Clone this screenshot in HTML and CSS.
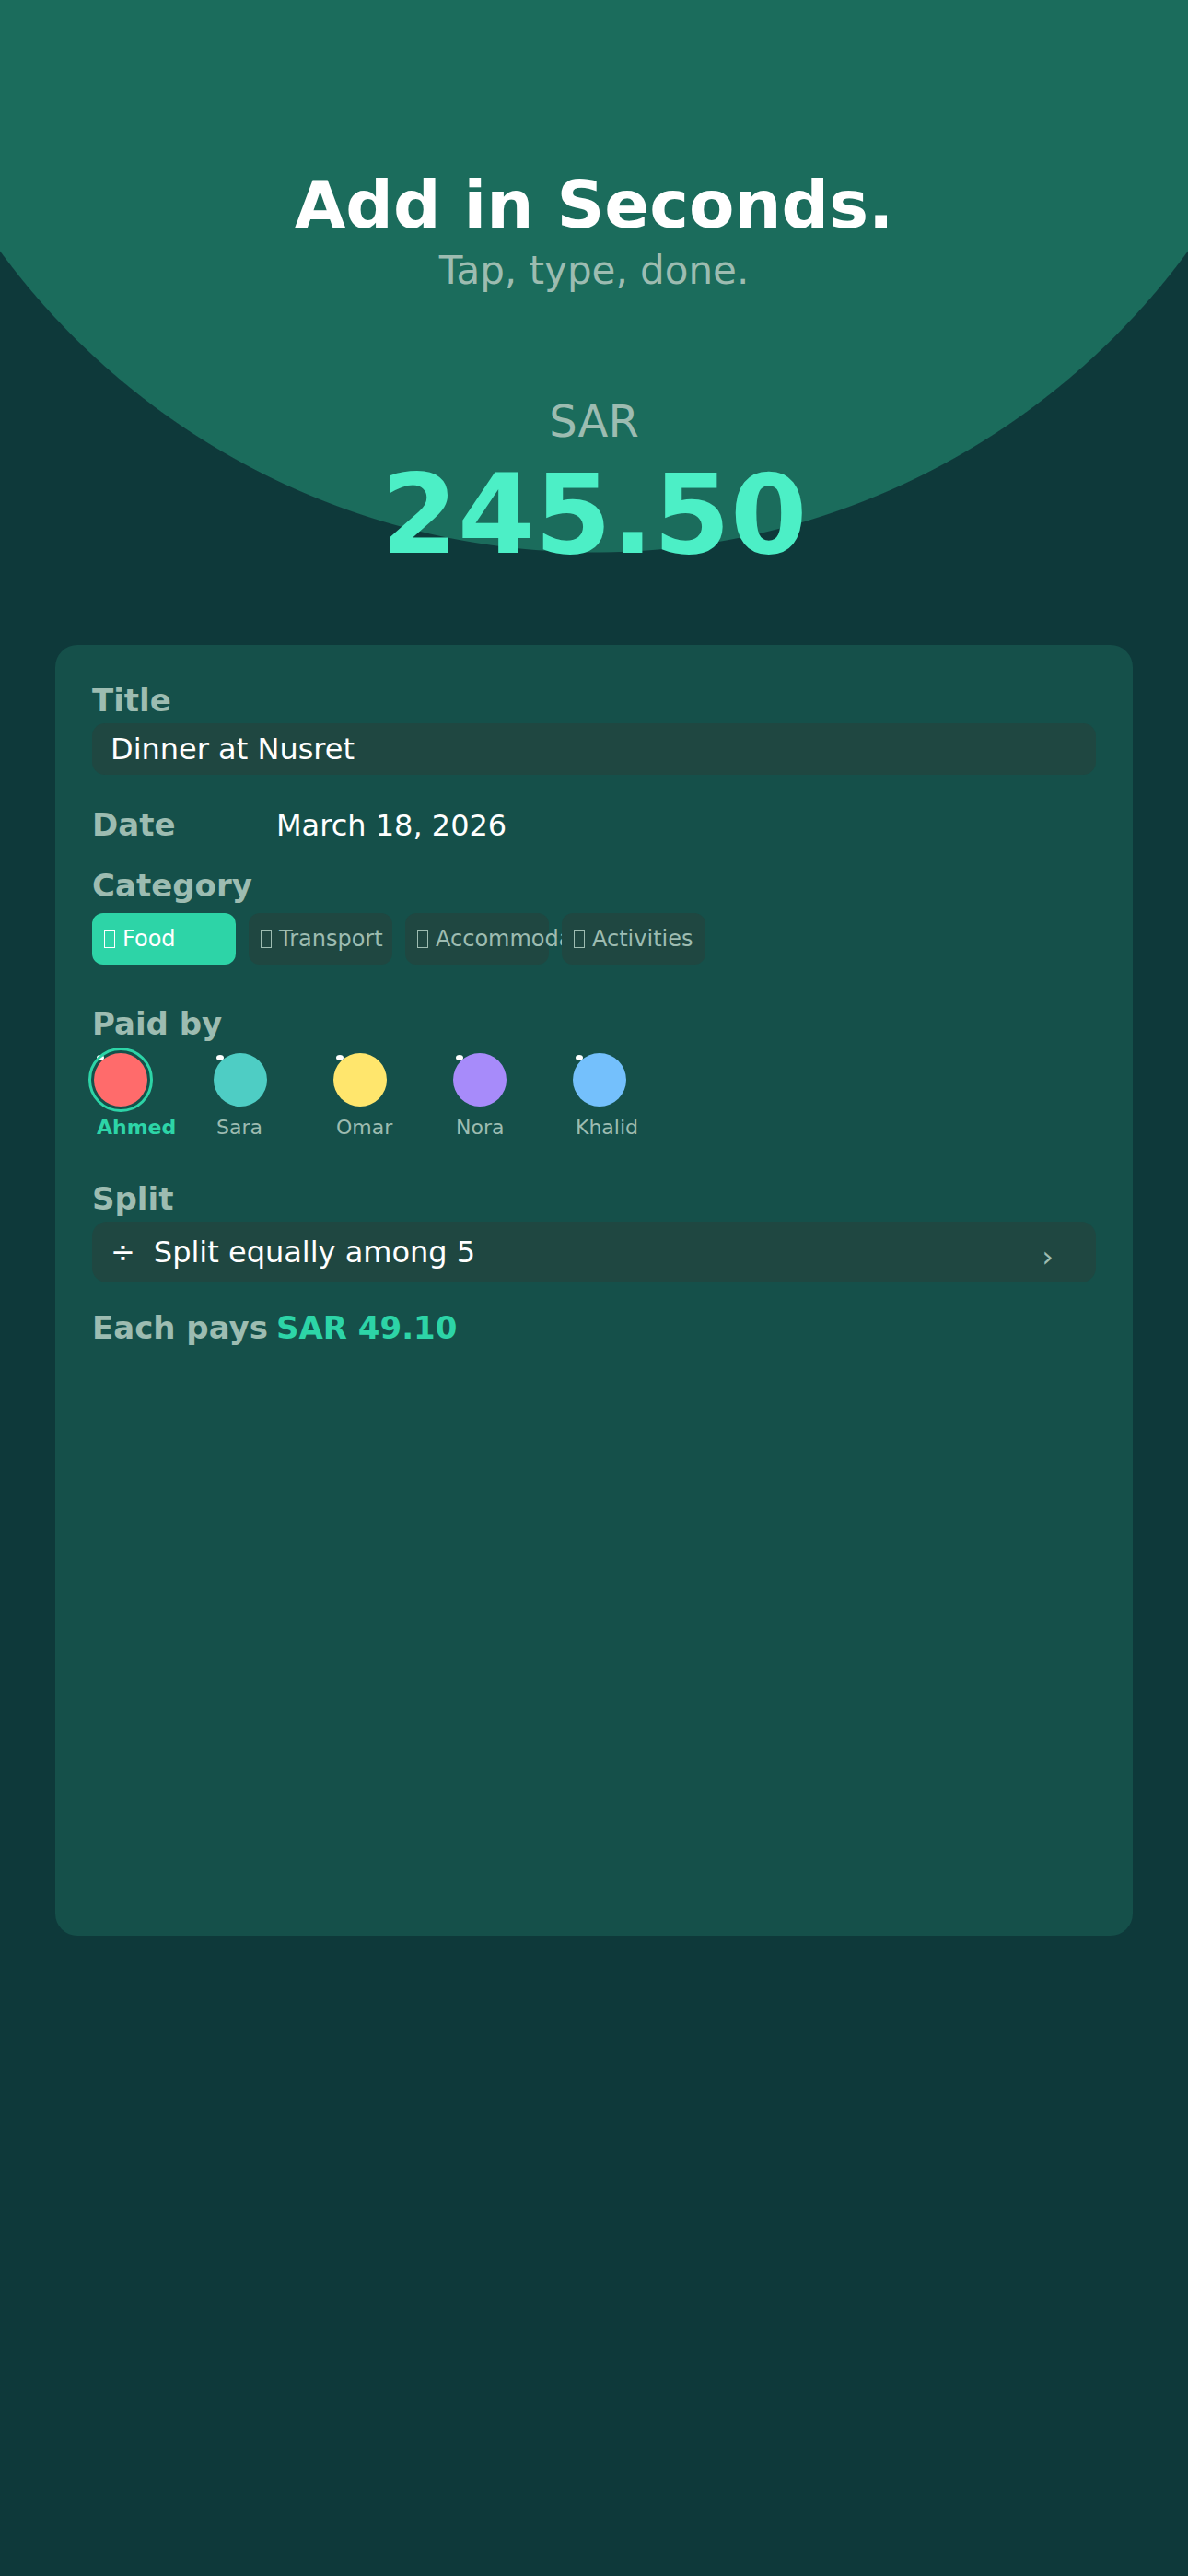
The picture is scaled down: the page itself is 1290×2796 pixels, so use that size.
FILE: index.html
```html
<!DOCTYPE html>
<html lang="en">
<head>
<meta charset="utf-8">
<title>Add in Seconds</title>
<link rel="stylesheet" href="styles.css">
</head>
<body>
<div class="page">
  <header class="hero">
    <h1 class="hero-title">Add in Seconds.</h1>
    <p class="hero-sub">Tap, type, done.</p>
    <div class="currency">SAR</div>
    <div class="amount">245.50</div>
  </header>

  <section class="card">
    <div class="label field-label">Title</div>
    <div class="input">Dinner at Nusret</div>

    <div class="row date-row">
      <span class="label row-label">Date</span>
      <span class="value">March 18, 2026</span>
    </div>

    <div class="label cat-label">Category</div>
    <div class="chips">
      <span class="chip active"><span class="tofu"></span><span class="chip-text">Food</span></span>
      <span class="chip"><span class="tofu"></span><span class="chip-text">Transport</span></span>
      <span class="chip"><span class="tofu"></span><span class="chip-text">Accommodation</span></span>
      <span class="chip"><span class="tofu"></span><span class="chip-text">Activities</span></span>
    </div>

    <div class="label paid-label">Paid by</div>
    <div class="payers">
      <div class="payer">
        <span class="avatar selected c-red"></span>
        <span class="name selected">Ahmed</span>
      </div>
      <div class="payer">
        <span class="avatar c-teal"></span>
        <span class="name">Sara</span>
      </div>
      <div class="payer">
        <span class="avatar c-yellow"></span>
        <span class="name">Omar</span>
      </div>
      <div class="payer">
        <span class="avatar c-purple"></span>
        <span class="name">Nora</span>
      </div>
      <div class="payer">
        <span class="avatar c-blue"></span>
        <span class="name">Khalid</span>
      </div>
    </div>

    <div class="label split-label">Split</div>
    <div class="split-box">
      <span class="split-icon">÷</span>
      <span class="split-text">Split equally among 5</span>
      <span class="chev">›</span>
    </div>

    <div class="row each-row">
      <span class="label row-label">Each pays</span>
      <span class="each-value">SAR 49.10</span>
    </div>
  </section>
</div>
</body>
</html>
```

FILE: styles.css
```css
html, body {
  margin: 0;
  padding: 0;
  background: #0e393a;
}

body {
  font-family: "DejaVu Sans", "Noto Sans", sans-serif;
}

.page {
  width: 1290px;
  min-height: 2796px;
  background: radial-gradient(circle 800px at 645px -200px, #1b6c5c 799px, #0e393a 800px);
  overflow: hidden;
}

.hero {
  padding-top: 180px;
  text-align: center;
}

.hero-title {
  margin: 0;
  font-size: 72px;
  line-height: 84px;
  font-weight: 700;
  color: #ffffff;
}

.hero-sub {
  margin: 6px 0 0;
  font-size: 42px;
  line-height: 48px;
  color: #9dbcb1;
}

.currency {
  margin-top: 112px;
  font-size: 48px;
  line-height: 54px;
  color: #9dbcb1;
}

.amount {
  margin-top: 5px;
  font-size: 120px;
  line-height: 140px;
  font-weight: 700;
  color: #4cefc6;
}

.card {
  margin: 71px 60px 0;
  height: 1401px;
  box-sizing: border-box;
  padding: 40px;
  background: #15504a;
  border-radius: 24px;
}

.label {
  font-size: 34px;
  line-height: 40px;
  font-weight: 700;
  color: #9dbcb1;
}

.field-label {
  margin-bottom: 5px;
}

.input {
  height: 56px;
  box-sizing: border-box;
  padding: 0 20px;
  display: flex;
  align-items: center;
  border-radius: 14px;
  background: #1f4741;
  font-size: 32px;
  color: #ffffff;
}

.row {
  display: flex;
  align-items: baseline;
  line-height: 40px;
}

.row-label {
  width: 200px;
  flex-shrink: 0;
  white-space: nowrap;
}

.date-row {
  margin: 34px 0 25px;
}

.value {
  font-size: 32px;
  color: #ffffff;
}

.cat-label {
  margin-bottom: 10px;
}

.chips {
  display: flex;
  gap: 14px;
}

.chip {
  width: 156px;
  height: 56px;
  flex-shrink: 0;
  box-sizing: border-box;
  padding-left: 13px;
  display: flex;
  align-items: center;
  border-radius: 12px;
  background: #1f4741;
  color: #9dbcb1;
  font-size: 24px;
  white-space: nowrap;
}

.chip.active {
  background: #2dd4a7;
  color: #ffffff;
}

.tofu {
  flex-shrink: 0;
  width: 12px;
  height: 20px;
  box-sizing: border-box;
  border: 1.5px solid currentColor;
  margin-right: 8px;
}

.paid-label {
  margin-top: 44px;
}

.payers {
  display: flex;
  margin-top: 12px;
  padding-left: 2px;
}

.payer {
  width: 130px;
  display: flex;
  flex-direction: column;
  align-items: flex-start;
}

.avatar {
  position: relative;
  width: 58px;
  height: 58px;
  border-radius: 50%;
}

.avatar::before {
  content: "";
  position: absolute;
  left: 3px;
  top: 2px;
  width: 8px;
  height: 6px;
  border-radius: 50%;
  background: #ffffff;
}

.avatar.selected::after {
  content: "";
  position: absolute;
  inset: -6px;
  border: 3px solid #2dd4a7;
  border-radius: 50%;
  z-index: 1;
}

.c-red { background: #ff6b6b; }
.c-teal { background: #4ecdc4; }
.c-yellow { background: #ffe66d; }
.c-purple { background: #a78bfa; }
.c-blue { background: #74c0fc; }

.name {
  margin-top: 10px;
  padding-left: 3px;
  font-size: 22px;
  line-height: 26px;
  color: #9dbcb1;
}

.name.selected {
  color: #2dd4a7;
  font-weight: 700;
}

.split-label {
  margin-top: 44px;
  margin-bottom: 5px;
}

.split-box {
  height: 66px;
  box-sizing: border-box;
  padding: 0 46px 0 20px;
  display: flex;
  align-items: center;
  border-radius: 16px;
  background: #1f4741;
  font-size: 32px;
  color: #ffffff;
}

.split-icon {
  margin-right: 20px;
}

.chev {
  margin-left: auto;
  padding-top: 10px;
  color: #9dbcb1;
}

.each-row {
  margin-top: 29px;
}

.each-value {
  font-size: 34px;
  font-weight: 700;
  color: #2dd4a7;
}
```
